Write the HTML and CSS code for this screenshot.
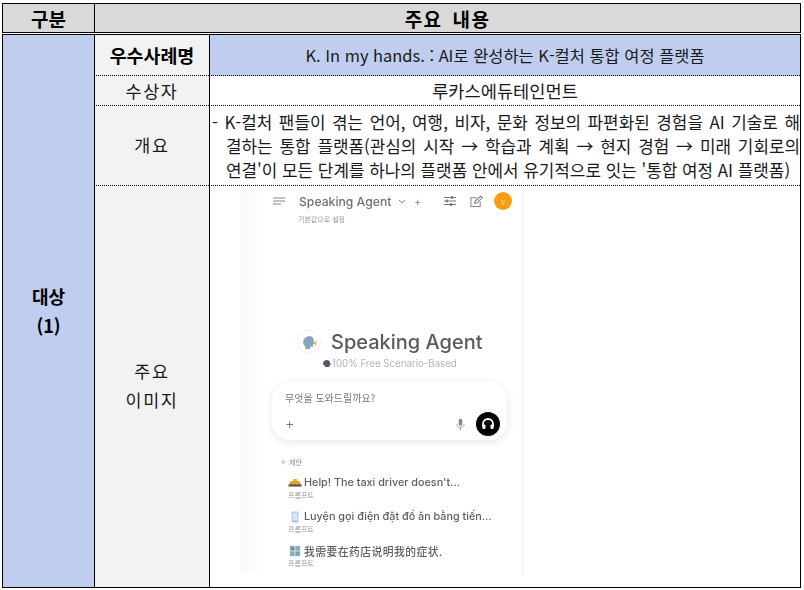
FILE: index.html
```html
<!DOCTYPE html>
<html lang="ko">
<head>
<meta charset="utf-8">
<title>주요 내용</title>
<link rel="stylesheet" href="styles.css">
</head>
<body>
<div class="sheet">
  <div class="head">
    <div class="head-a">구분</div>
    <div class="head-b">주요 내용</div>
  </div>
  <div class="table">
    <div class="target">대상<br>(1)</div>
    <div class="label label-bold row-1">우수사례명</div>
    <div class="value value-blue row-1">K. In my hands. : AI로 완성하는 K-컬처 통합 여정 플랫폼</div>
    <div class="label row-2">수상자</div>
    <div class="value row-2">루카스에듀테인먼트</div>
    <div class="label label-overview row-3">개요</div>
    <div class="value value-text row-3">
      <p class="desc">
        <span class="line line-first">- K-컬처 팬들이 겪는 언어, 여행, 비자, 문화 정보의 파편화된 경험을 AI 기술로 해</span>
        <span class="line">결하는 통합 플랫폼(관심의 시작 → 학습과 계획 → 현지 경험 → 미래 기회로의</span>
        <span class="line line-last">연결'이 모든 단계를 하나의 플랫폼 안에서 유기적으로 잇는 '통합 여정 AI 플랫폼)</span>
      </p>
    </div>
    <div class="label label-last">주요<br>이미지</div>
    <div class="value-image">
      <div class="shot">
        <div class="app">
          <div class="topbar">
            <svg class="ic-menu" viewBox="0 0 12 8"><path d="M0 1h12M0 4h12M0 7h8" stroke="#888" stroke-width="1.1" fill="none"/></svg>
            <span class="agent-name">Speaking Agent</span>
            <svg class="ic-chev" viewBox="0 0 8 5"><path d="M1 1l3 3 3-3" stroke="#888" stroke-width="1" fill="none"/></svg>
            <span class="top-plus">+</span>
            <svg class="ic-sliders" viewBox="0 0 12 10"><path d="M0 1.5h12M0 5h12M0 8.5h12" stroke="#777" stroke-width="1" fill="none"/><path d="M8 0v3M3 3.5v3M7 7v3" stroke="#666" stroke-width="1.4" fill="none"/></svg>
            <svg class="ic-edit" viewBox="0 0 14 13"><path d="M11 6.5V12H1V2.5h6" stroke="#888" stroke-width="1.1" fill="none"/><path d="M5 8.5l.5-2.5L11.5 .8l1.7 1.7L7.5 8z" stroke="#777" stroke-width="1.1" fill="none"/></svg>
            <span class="avatar">우</span>
          </div>
          <div class="default-note">기본값으로 설정</div>
          <div class="brand">
            <span class="brand-logo">
              <svg viewBox="0 0 16 16"><path d="M2 8c0-4 3-6 6-6 3 0 4 2 4 4l1 3-1.500.5V12H8.500v2H4v-2.500C2.800 10.500 2 9.500 2 8z" fill="#8aa4bd"/><path d="M14.500 6l-1.500 3h1l-.8 2" stroke="#d8b94a" stroke-width="1" fill="none"/></svg>
            </span>
            <span class="brand-name">Speaking Agent</span>
          </div>
          <div class="brand-sub">
            <svg class="ic-head" viewBox="0 0 10 9"><path d="M1 4.500C1 2 3 1 5 1s3 1.500 3 3l1 2H7.500v2H3V7C2 6.500 1 5.500 1 4.500z" fill="#56586a"/></svg><span>100% Free Scenario-Based</span>
          </div>
          <div class="prompt-card">
            <div class="prompt-text">무엇을 도와드릴까요?</div>
            <div class="prompt-tools">
              <span class="prompt-plus">+</span>
              <svg class="ic-mic" viewBox="0 0 10 14"><rect x="3" y="0.500" width="4" height="8" rx="2" fill="#888"/><path d="M1 6.500c0 5 8 5 8 0M5 10.500V13.500" stroke="#999" stroke-width="1" fill="none"/></svg>
              <span class="voice">
                <svg viewBox="0 0 14 14"><path d="M2 10V7a5 5 0 0 1 10 0v3" stroke="#fff" stroke-width="1.800" fill="none"/><rect x="1.500" y="7.500" width="3" height="4.500" rx="1" fill="#fff"/><rect x="9.500" y="7.500" width="3" height="4.500" rx="1" fill="#fff"/></svg>
              </span>
            </div>
          </div>
          <div class="suggest-title"><span class="spark">✧</span> 제안</div>
          <div class="suggest">
            <div class="suggest-line">
              <svg class="ic-emoji" viewBox="0 0 14 10"><path d="M1 8V6l2-3h8l2 3v2z" fill="#d9a52e"/><rect x="5" y="1" width="4" height="2" fill="#e0b030"/><rect x="0.500" y="6.500" width="13" height="2" fill="#5a4a30"/></svg>
              <span>Help! The taxi driver doesn't...</span>
            </div>
            <div class="suggest-tag">프롬프트</div>
          </div>
          <div class="suggest">
            <div class="suggest-line">
              <svg class="ic-emoji" viewBox="0 0 14 14"><rect x="3" y="0.500" width="8" height="13" rx="1.500" fill="#a9c7e4"/><rect x="4" y="2" width="6" height="9" fill="#d5e6f4"/></svg>
              <span>Luyện gọi điện đặt đồ ăn bằng tiến...</span>
            </div>
            <div class="suggest-tag">프롬프트</div>
          </div>
          <div class="suggest">
            <div class="suggest-line">
              <svg class="ic-emoji" viewBox="0 0 14 14"><rect x="1" y="1" width="12" height="12" fill="#7fb0cf"/><rect x="3" y="3" width="3" height="3" fill="#d9534f"/><rect x="8" y="8" width="3" height="3" fill="#6fa86a"/><path d="M1 7h12M7 1v12" stroke="#e8e2c8" stroke-width="1"/></svg>
              <span class="zh">我需要在药店说明我的症状.</span>
            </div>
            <div class="suggest-tag">프롬프트</div>
          </div>
        </div>
      </div>
    </div>
  </div>
</div>
</body>
</html>
```

FILE: styles.css
```css
* { box-sizing: border-box; }
html, body { margin: 0; padding: 0; background: #fff; }
body {
  width: 804px;
  height: 590px;
  overflow: hidden;
  font-family: "Noto Sans CJK KR", "Noto Sans", sans-serif;
  color: #000;
}
.sheet { padding: 3px 3px 0 2px; }

.head {
  display: grid;
  grid-template-columns: 91px 1fr;
  height: 30px;
  border: 1px solid #000;
  background: #d9d9d9;
  font-size: 19px;
  font-weight: 700;
}
.head-a, .head-b {
  display: flex;
  align-items: center;
  justify-content: center;
  line-height: 1;
}
.head-b { border-left: 1px solid #000; letter-spacing: 1.5px; word-spacing: 3px; }

.table {
  display: grid;
  grid-template-columns: 91px 115px 1fr;
  grid-template-rows: 41px 30px 80px 1fr;
  height: 554px;
  margin-top: 1px;
  border: 1px solid #000;
}
.target {
  grid-row: 1 / 5;
  display: flex;
  align-items: center;
  justify-content: center;
  text-align: center;
  background: #bfcdee;
  font-size: 18px;
  font-weight: 700;
  line-height: 29px;
  padding-bottom: 1px;
}
.label {
  display: flex;
  align-items: center;
  justify-content: center;
  text-align: center;
  border-left: 1px solid #000;
  background: #f2f2f2;
  font-size: 17.4px;
  line-height: 29px;
  letter-spacing: 1.7px;
  color: #1a1a1a;
}
.label-bold { font-weight: 700; font-size: 18.4px; letter-spacing: 0; color: #000; }
.label-overview { padding-bottom: 2px; }
.row-1, .row-2, .row-3 { border-bottom: 1px dotted #000; }
.value {
  display: flex;
  align-items: center;
  justify-content: center;
  border-left: 1px solid #000;
  font-size: 17.6px;
  line-height: 24px;
  color: #1a1a1a;
}
.value-blue { background: #bfcdee; font-size: 16.45px; }
.value-text { justify-content: flex-start; padding: 0 0 0 2px; }
.desc {
  width: 588px;
  margin: 0;
  padding-left: 14px;
  font-size: 16.9px;
  line-height: 24px;
}
.line {
  display: block;
  text-align: justify;
  text-align-last: justify;
}
.line-first { margin-left: -14px; }
.line-last { text-align-last: left; white-space: nowrap; }
.label-last { padding-bottom: 4px; }
.value-image {
  border-left: 1px solid #000;
  min-height: 0;
  padding: 0 0 14px 30px;
}
.shot {
  width: 284px;
  height: 387px;
  background: linear-gradient(90deg, #f9f9f9, #fdfdfd 6%, #fff 100%);
  padding-left: 18px;
  filter: blur(0.55px);
}
.app {
  width: 265px;
  height: 100%;
  background: #fff;
  border-right: 1px solid #f1f1f1;
  overflow: hidden;
}
.topbar {
  display: flex;
  align-items: center;
  height: 18px;
  margin-top: 6px;
  padding-left: 15px;
}
.ic-menu { width: 12px; height: 8px; }
.agent-name { margin-left: 14px; font-family: "Inter", sans-serif; font-weight: 500; font-size: 12.2px; color: #707070; width: 94px; white-space: nowrap; }
.ic-chev { width: 8px; height: 5px; margin-left: 5px; }
.top-plus { margin-left: 9px; font-size: 10px; color: #777; width: 8px; }
.ic-sliders { width: 12px; height: 10px; margin-left: 21px; }
.ic-edit { width: 13px; height: 13px; margin-left: 14px; }
.avatar {
  display: flex;
  align-items: center;
  justify-content: center;
  width: 18px;
  height: 18px;
  margin-left: 11px;
  border-radius: 50%;
  background: #f59e14;
  color: #fbe3b8;
  font-size: 5px;
}
.default-note { margin: 3px 0 0 40px; font-size: 7px; line-height: 12px; color: #999; }
.brand {
  display: flex;
  align-items: center;
  margin: 104px 0 0 39px;
  height: 26px;
}
.brand-logo {
  display: flex;
  align-items: center;
  justify-content: center;
  width: 24px;
  height: 24px;
  border-radius: 50%;
  border: 1px solid #f0f0f0;
}
.brand-logo svg { width: 17px; height: 17px; }
.brand-name { margin-left: 10px; font-family: "Inter", sans-serif; font-weight: 500; font-size: 20px; color: #5a5a5a; white-space: nowrap; }
.brand-sub {
  display: flex;
  align-items: center;
  margin: 1px 0 0 64px;
  height: 14px;
  font-family: "Inter", sans-serif;
  font-size: 9.7px;
  color: #b5b5b5;
  white-space: nowrap;
}
.ic-head { width: 10px; height: 9px; }
.prompt-card {
  width: 235px;
  height: 58px;
  margin: 12px 0 0 14px;
  padding: 8px 7px 0 13px;
  border-radius: 18px;
  background: #fff;
  box-shadow: 0 2px 8px rgba(0,0,0,0.10);
}
.prompt-text { font-size: 10px; line-height: 15px; color: #777; }
.prompt-tools { display: flex; align-items: center; height: 24px; margin-top: 7px; }
.prompt-plus { font-size: 14px; font-weight: 300; line-height: 24px; color: #555; margin-left: 1px; flex: 1; }
.ic-mic { width: 9px; height: 13px; margin-right: 11px; }
.voice {
  display: flex;
  align-items: center;
  justify-content: center;
  width: 24px;
  height: 24px;
  border-radius: 50%;
  background: #000;
}
.voice svg { width: 14px; height: 14px; }
.suggest-title { margin: 16px 0 0 22px; height: 12px; font-size: 7px; line-height: 12px; color: #888; }
.spark { font-size: 8px; }
.suggest { margin: 6px 0 0 30px; padding-top: 1px; height: 28px; }
.suggest-line { display: flex; align-items: center; height: 15px; gap: 2px; font-family: "Inter", sans-serif; font-weight: 500; font-size: 10.8px; color: #5f5f5f; white-space: nowrap; }
.zh { font-family: "Noto Sans CJK SC", sans-serif; letter-spacing: 0.45px; }
.ic-emoji { width: 14px; height: 12px; }
.suggest-tag { font-size: 7px; line-height: 10px; color: #999; }
```
